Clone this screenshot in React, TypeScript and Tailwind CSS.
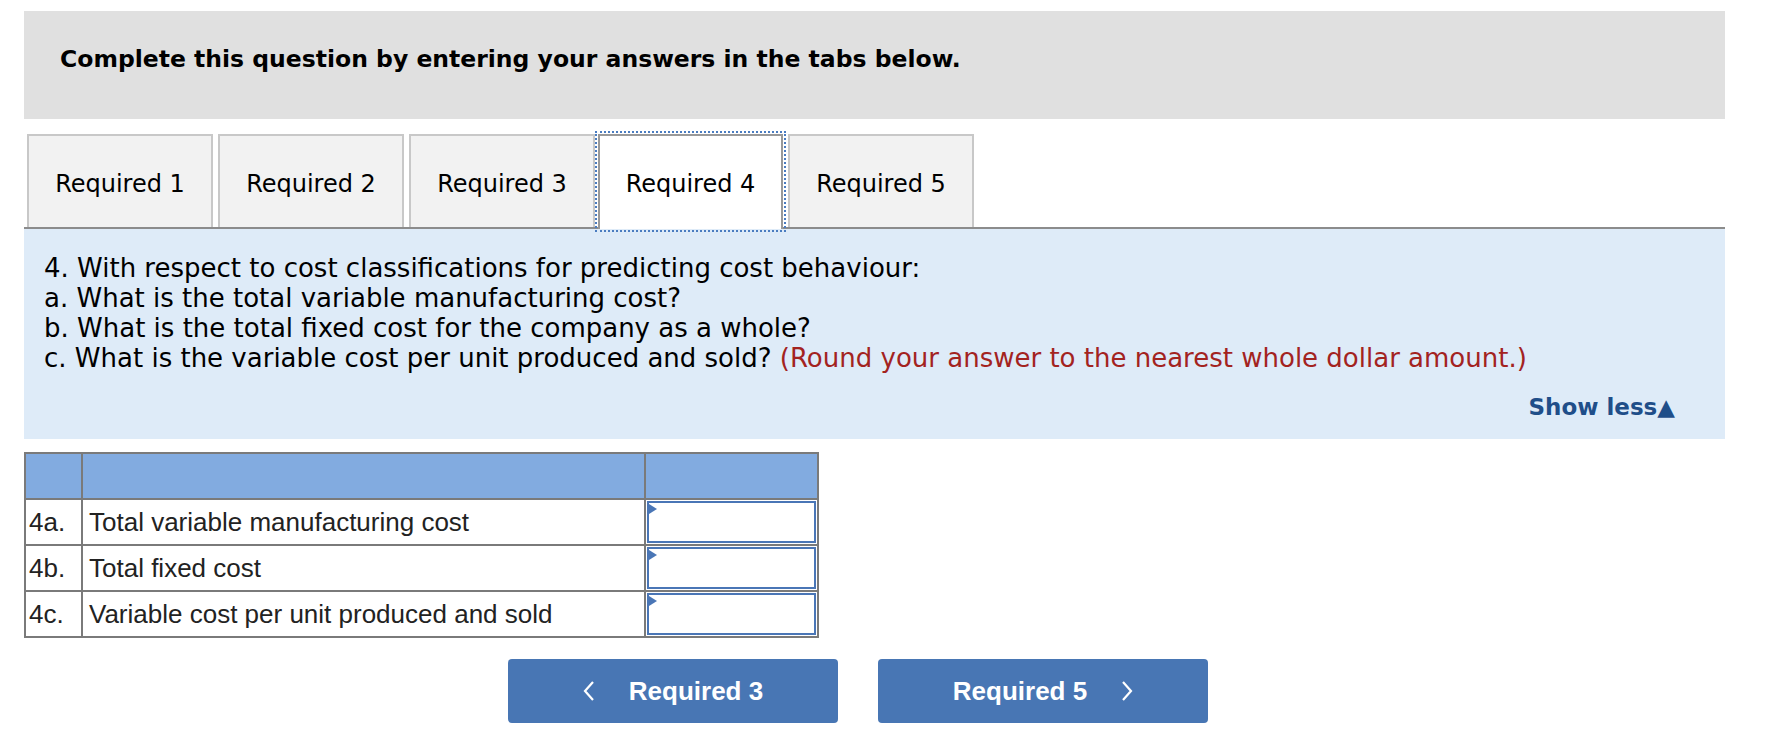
import React from "react";

const tabs = ["Required 1", "Required 2", "Required 3", "Required 4", "Required 5"];
const active = 3;

const rows = [
  { id: "4a.", label: "Total variable manufacturing cost" },
  { id: "4b.", label: "Total fixed cost" },
  { id: "4c.", label: "Variable cost per unit produced and sold" },
];

function AnswerInput() {
  return (
    <div className="relative h-full w-full border-2 border-[#4a76b6] bg-white">
      <div className="absolute left-0 top-[1px] h-0 w-0 border-y-[5px] border-l-[8px] border-y-transparent border-l-[#4a76b6]" />
    </div>
  );
}

export default function App() {
  return (
    <div className="min-h-screen bg-white pt-[11px]">
      <div className="ml-[24px] w-[1701px]">
        {/* Banner */}
        <div className="h-[108px] bg-[#e0e0e0] pl-[36px] pt-[31px]">
          <p className="font-['DejaVu_Sans',sans-serif] text-[23.5px] font-bold text-black">
            Complete this question by entering your answers in the tabs below.
          </p>
        </div>

        {/* Tabs */}
        <div className="mt-[15px] flex gap-[5px] border-b-2 border-[#8c8c8c] pl-[3px]">
          {tabs.map((t, i) => (
            <div
              key={t}
              className={
                i === active
                  ? "relative z-10 -mb-[2px] -ml-[2px] flex h-[95px] w-[185px] items-center justify-center border-2 border-b-0 border-[#999999] bg-white pt-[2px] outline-2 outline-offset-[1px] outline-dotted outline-[#4a7cc0]"
                  : "flex h-[93px] w-[186px] items-center justify-center border-2 border-b-0 border-[#c8c8c8] bg-[#f2f2f2] pt-[4px]"
              }
            >
              <span className="font-['DejaVu_Sans',sans-serif] text-[24px] text-black">{t}</span>
            </div>
          ))}
        </div>

        {/* Question panel */}
        <div className="bg-[#deebf8] pb-[17px] pl-[20px] pr-[50px] pt-[24px] font-['DejaVu_Sans',sans-serif] text-[26px] leading-[30px] text-black">
          <p>4. With respect to cost classifications for predicting cost behaviour:</p>
          <p>a. What is the total variable manufacturing cost?</p>
          <p>b. What is the total fixed cost for the company as a whole?</p>
          <p>
            c. What is the variable cost per unit produced and sold?{" "}
            <span className="text-[#a3231f]">(Round your answer to the nearest whole dollar amount.)</span>
          </p>
          <div className="mt-[19px] flex justify-end">
            <span className="text-[23px] font-bold text-[#1f4e89]">Show less▲</span>
          </div>
        </div>

        {/* Answer table */}
        <table className="mt-[13px] w-[795px] border-collapse font-['Liberation_Sans',Arial,sans-serif] text-[26px] text-[#222]">
          <thead>
            <tr className="h-[46px] bg-[#82abe0]">
              <th className="w-[57px] border-2 border-[#7a7a7a]" />
              <th className="w-[563px] border-2 border-[#7a7a7a]" />
              <th className="border-2 border-[#7a7a7a]" />
            </tr>
          </thead>
          <tbody>
            {rows.map((r) => (
              <tr key={r.id} className="h-[46px]">
                <td className="border-2 border-[#7a7a7a] pl-[3px] leading-none">{r.id}</td>
                <td className="border-2 border-[#7a7a7a] pl-[6px] leading-none">{r.label}</td>
                <td className="h-[46px] border-2 border-[#7a7a7a] p-[1px]">
                  <div className="h-[42px]">
                    <AnswerInput />
                  </div>
                </td>
              </tr>
            ))}
          </tbody>
        </table>

        {/* Nav buttons */}
        <div className="ml-[484px] mt-[21px] flex gap-[40px] font-['Liberation_Sans',Arial,sans-serif] text-[26px] font-bold text-white">
          <button className="flex h-[64px] w-[330px] items-center justify-center gap-[34px] rounded-[4px] bg-[#4876b4]">
            <svg width="12" height="22" viewBox="0 0 12 22" fill="none" stroke="white" strokeWidth="2.2">
              <path d="M10 2 L2 11 L10 20" />
            </svg>
            <span>Required 3</span>
          </button>
          <button className="flex h-[64px] w-[330px] items-center justify-center gap-[34px] rounded-[4px] bg-[#4876b4]">
            <span>Required 5</span>
            <svg width="12" height="22" viewBox="0 0 12 22" fill="none" stroke="white" strokeWidth="2.2">
              <path d="M2 2 L10 11 L2 20" />
            </svg>
          </button>
        </div>
      </div>
    </div>
  );
}
